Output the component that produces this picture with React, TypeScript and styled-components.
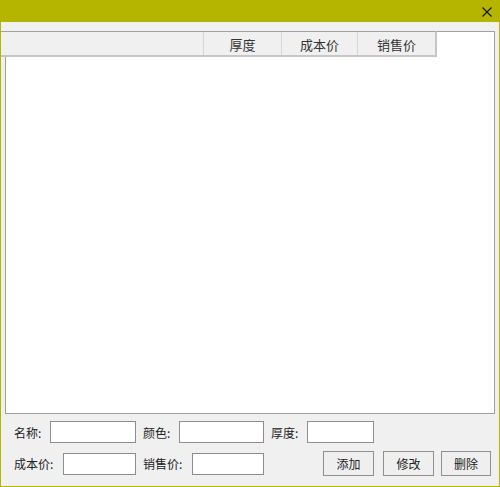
import styled, { createGlobalStyle } from 'styled-components'

const GlobalStyle = createGlobalStyle`
  html, body {
    margin: 0;
    padding: 0;
    background: #f0f0f0;
  }
  * {
    box-sizing: border-box;
  }
`

const ACCENT = '#b5b500'
const FONT = `"Noto Sans CJK SC", "Microsoft YaHei", "DejaVu Sans", sans-serif`

const Window = styled.div`
  width: 500px;
  height: 487px;
  display: flex;
  flex-direction: column;
  border: 1px solid ${ACCENT};
  border-top: none;
  font-family: ${FONT};
  font-size: 12px;
  color: #1a1a1a;
  overflow: hidden;
`

const TitleBar = styled.div`
  height: 22px;
  margin: 0 -1px;
  background: ${ACCENT};
  display: flex;
  justify-content: flex-end;
  align-items: center;
  padding-right: 8px;
  flex-shrink: 0;
`

const CloseButton = styled.div`
  width: 10px;
  height: 10px;
  display: flex;
  margin-top: 2px;
`

const Client = styled.div`
  flex: 1;
  display: flex;
  flex-direction: column;
  background: #f0f0f0;
  padding: 9px 4px 0 4px;
`

const ListBox = styled.div`
  position: relative;
  height: 383px;
  background: #fff;
  border: 1px solid #a0a0a0;
`

const Header = styled.div`
  position: absolute;
  top: -1px;
  left: -5px;
  width: 436px;
  height: 26px;
  display: flex;
  background: #f0f0f0;
  border-top: 1px solid #a0a0a0;
  border-bottom: 2px solid #c6c6c6;
  border-right: 2px solid #c6c6c6;
`

const HeaderCell = styled.div<{ $w: number }>`
  width: ${(p) => p.$w}px;
  flex-shrink: 0;
  display: flex;
  align-items: center;
  justify-content: center;
  border-right: 1px solid #d5d5d5;
  font-size: 13px;
  color: #333;
  padding-top: 1px;

  &:last-child {
    border-right: none;
  }
`

const Form = styled.div`
  display: flex;
  flex-direction: column;
  padding: 7px 0 0 9px;
  gap: 8px;
`

const Row = styled.div<{ $h: number }>`
  display: flex;
  align-items: center;
  height: ${(p) => p.$h}px;
`

const Label = styled.span<{ $w: number; $ml?: number }>`
  width: ${(p) => p.$w}px;
  margin-left: ${(p) => p.$ml ?? 0}px;
  flex-shrink: 0;
  white-space: nowrap;
  color: #222;
`

const Input = styled.input<{ $w: number }>`
  width: ${(p) => p.$w}px;
  height: 22px;
  flex-shrink: 0;
  margin: 0;
  padding: 0 3px;
  border: 1px solid #8e8e8e;
  background: #fff;
  font-family: ${FONT};
  font-size: 12px;
  outline: none;
`

const Button = styled.button<{ $w: number; $ml: number }>`
  width: ${(p) => p.$w}px;
  height: 25px;
  margin-left: ${(p) => p.$ml}px;
  padding: 0;
  flex-shrink: 0;
  border: 1px solid #8f8f8f;
  background: #efefef;
  font-family: ${FONT};
  font-size: 12px;
  color: #222;
`

const columns = [
  { label: '', w: 203 },
  { label: '厚度', w: 78 },
  { label: '成本价', w: 76 },
  { label: '销售价', w: 77 },
]

export default function App() {
  return (
    <>
      <GlobalStyle />
      <Window>
        <TitleBar>
          <CloseButton>
            <svg width="10" height="10" viewBox="0 0 10 10">
              <path d="M0.5 0.5 L9.5 9.5 M9.5 0.5 L0.5 9.5" stroke="#111" strokeWidth="1.1" />
            </svg>
          </CloseButton>
        </TitleBar>
        <Client>
          <ListBox>
            <Header>
              {columns.map((c, i) => (
                <HeaderCell key={i} $w={c.w}>
                  {c.label}
                </HeaderCell>
              ))}
            </Header>
          </ListBox>
          <Form>
            <Row $h={22}>
              <Label $w={36}>名称:</Label>
              <Input $w={86} />
              <Label $w={36} $ml={7}>颜色:</Label>
              <Input $w={85} />
              <Label $w={36} $ml={7}>厚度:</Label>
              <Input $w={67} />
            </Row>
            <Row $h={25}>
              <Label $w={49}>成本价:</Label>
              <Input $w={73} />
              <Label $w={49} $ml={7}>销售价:</Label>
              <Input $w={72} />
              <Button $w={51} $ml={59}>添加</Button>
              <Button $w={51} $ml={9}>修改</Button>
              <Button $w={50} $ml={7}>删除</Button>
            </Row>
          </Form>
        </Client>
      </Window>
    </>
  )
}
